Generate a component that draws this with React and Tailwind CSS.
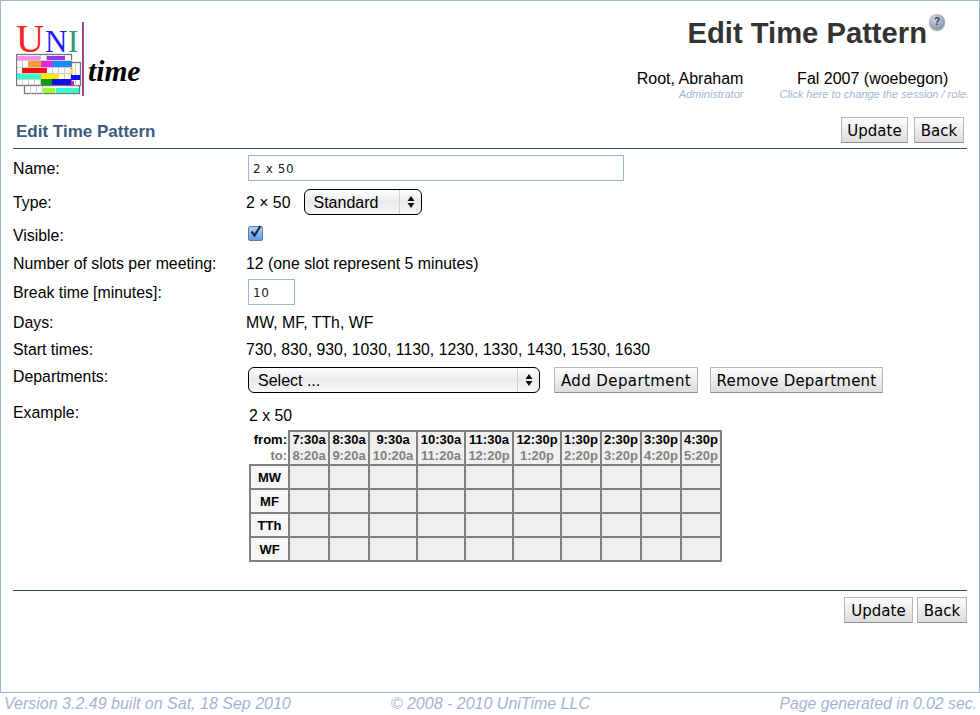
import React from 'react';

const sans = "font-['Liberation_Sans',Arial,sans-serif]";
const fromTimes = ['7:30a', '8:30a', '9:30a', '10:30a', '11:30a', '12:30p', '1:30p', '2:30p', '3:30p', '4:30p'];
const toTimes = ['8:20a', '9:20a', '10:20a', '11:20a', '12:20p', '1:20p', '2:20p', '3:20p', '4:20p', '5:20p'];
const colWidths = ['w-[40px]', 'w-[40px]', 'w-[48px]', 'w-[48px]', 'w-[48px]', 'w-[48px]', 'w-[40px]', 'w-[40px]', 'w-[40px]', 'w-[40px]'];
const days = ['MW', 'MF', 'TTh', 'WF'];

const Logo = () => (
  <svg width="130" height="108" viewBox="0 12 130 108" className="block">
    <text x="0" y="52" fontFamily="Liberation Serif" fontSize="39" fill="#ff2020">U</text>
    <text x="29" y="52" fontFamily="Liberation Serif" fontSize="31" fill="#2020ee">N</text>
    <text x="52" y="52" fontFamily="Liberation Serif" fontSize="31" fill="#2f9a6a">I</text>
    <rect x="66" y="22" width="2" height="74" fill="#a0409a" />
    <text x="72" y="81" fontFamily="Liberation Serif" fontStyle="italic" fontWeight="bold" fontSize="29.5" fill="#000">time</text>
    <g stroke="#777" strokeWidth="1.3">
      <rect x="0.5" y="54.5" width="55" height="31" fill="#fff" />
      <rect x="8.5" y="85.5" width="55" height="8" fill="#fff" />
      <rect x="55.5" y="62.5" width="9" height="23" fill="#fff" />
    </g>
    <path d="M1 60.5H56M1 67.5H56M1 73.5H56M1 79.5H56M6.5 55V85M12.5 55V85M18.5 55V85M24.5 55V85M30.5 55V85M36.5 55V85M42.5 55V85M48.5 55V85M59.5 63V86M14.5 86V94M20.5 86V94M26.5 86V94" stroke="#ccc" strokeWidth="1" />
    <rect x="1" y="56" width="23" height="4" fill="#ff8cf0" />
    <rect x="31" y="56" width="18" height="4" fill="#9933ee" />
    <rect x="12" y="61" width="13" height="6" fill="#ff9a33" />
    <rect x="25" y="61" width="11" height="6" fill="#ee22dd" />
    <rect x="36" y="61" width="19" height="6" fill="#1a8cff" />
    <rect x="6" y="68" width="25" height="5" fill="#ee1111" />
    <rect x="55" y="69" width="2" height="5" fill="#ffee00" />
    <rect x="1" y="74" width="24" height="5" fill="#33ffcc" />
    <rect x="25" y="74" width="18" height="5" fill="#ffee00" />
    <rect x="55" y="75" width="9" height="5" fill="#1111ee" />
    <rect x="25" y="79" width="11" height="6" fill="#119911" />
    <rect x="36" y="79" width="19" height="6" fill="#1111ee" />
    <rect x="55" y="81" width="3" height="5" fill="#dd22cc" />
    <rect x="27" y="88" width="12" height="5" fill="#99ff33" />
    <rect x="40" y="88" width="23" height="5" fill="#33ffcc" />
  </svg>
);

const Button = ({ children, className }) => (
  <button className={`h-[26px] pt-px border border-[#b5b5b5] border-b-[#8f8f8f] bg-gradient-to-b from-[#fdfdfd] to-[#dcdcdc] font-['DejaVu_Sans',sans-serif] text-[15px] leading-[20px] text-black rounded-[1px] ${className}`}>
    {children}
  </button>
);

const Chevrons = () => (
  <svg width="8" height="14" viewBox="0 0 8 14" className="absolute right-[7px] top-[6px]">
    <path d="M4 1L7.5 6H.5zM4 13L.5 8h7z" fill="#111" />
  </svg>
);

const Select = ({ label, width }) => (
  <div className={`relative ${width}`}>
    <select defaultValue={label} className={`appearance-none w-full h-[26px] pt-px rounded-[6px] border border-black bg-gradient-to-b from-[#ffffff] via-[#e9e9e9] to-[#f8f8f8] pl-[9px] ${sans} text-[16px] text-black`}>
      <option>{label}</option>
    </select>
    <div className="absolute top-px bottom-px right-[22px] w-px bg-[#cfcfcf]"></div>
    <Chevrons />
  </div>
);

const Row = ({ label, children, className, labelClass }) => (
  <div className={`flex ${className}`}>
    <div className={`w-[233px] shrink-0 ${labelClass || 'pt-[2px]'}`}>{label}</div>
    <div className="flex-1 flex items-center">{children}</div>
  </div>
);

const textInput = "h-[26px] pt-[2px] border border-[#9fb5d6] bg-white px-[4px] font-['DejaVu_Sans',sans-serif] text-[12px] tracking-[0.6px] text-[#222] outline-none";

export default function App() {
  return (
    <div className={`w-[980px] h-[715px] bg-white overflow-hidden ${sans} text-[15.85px] text-black`}>
      <div className="h-[693px] border border-[#9fb5d6] px-[12px]">
        <div className="flex justify-between h-[119px]">
          <div className="pl-[3px] pt-[11px]"><Logo /></div>
          <div className="flex flex-col items-end">
            <div className="flex items-start mt-[12px] pr-[22px] h-[47px]">
              <span className="text-[29.2px] leading-[40px] font-bold text-[#333]">Edit Time Pattern</span>
              <span className="ml-[2px] mt-[1px] w-[16px] h-[16px] rounded-full bg-[radial-gradient(circle_at_40%_30%,#d3d9e4,#6f7c94)] shadow-[0_1px_1px_#999] text-[10px] leading-[16px] font-bold text-center text-[#2f3a58]">?</span>
            </div>
            <div className="flex mt-[9px] mr-[-2px]">
              <div className="flex flex-col items-end">
                <span className="text-[16px] leading-[19px]">Root, Abraham</span>
                <span className="text-[11px] leading-[12px] italic text-[#9fb5d6]">Administrator</span>
              </div>
              <div className="flex flex-col items-center ml-[36px]">
                <span className="text-[16px] leading-[19px] pr-[3px]">Fal 2007 (woebegon)</span>
                <span className="text-[11px] leading-[12px] italic text-[#9fb5d6]">Click here to change the session / role.</span>
              </div>
            </div>
          </div>
        </div>

        <div className="flex justify-between items-end h-[29px] border-b border-[#2f5070] pb-[5px]">
          <span className="pl-[3px] text-[17px] leading-[20px] pb-px font-bold text-[#3b5a80]">Edit Time Pattern</span>
          <div className="flex gap-[6px] pr-[3px]">
            <Button className="w-[67px]">Update</Button>
            <Button className="w-[50px]">Back</Button>
          </div>
        </div>

        <div className="pt-[6px]">
          <Row label="Name:" className="h-[26px] items-center">
            <input defaultValue="2 x 50" className={`${textInput} w-[376px] ml-[2px]`} />
          </Row>
          <Row label="Type:" className="h-[26px] items-center mt-[8px]">
            <span className="pt-[2px]">2 × 50</span>
            <div className="ml-[13px]"><Select label="Standard" width="w-[118px]" /></div>
          </Row>
          <Row label="Visible:" className="h-[26px] items-center mt-[7px]">
            <div className="relative ml-[2px] w-[15px] h-[15px] -mt-[3px]">
              <input type="checkbox" defaultChecked className="appearance-none block w-[15px] h-[15px] rounded-[2px] border border-[#5a7fae] bg-gradient-to-b from-[#b5d3f2] to-[#5f9be0]" />
              <svg width="16" height="16" viewBox="0 0 16 16" className="absolute -top-[2px] left-0 pointer-events-none">
                <path d="M3.5 7.5L6.5 11.5L12.5 2" fill="none" stroke="#1b2a4a" strokeWidth="2.2" />
              </svg>
            </div>
          </Row>
          <Row label="Number of slots per meeting:" className="h-[20px] items-center mt-[5px]">
            <span className="pt-[2px]">12 (one slot represent 5 minutes)</span>
          </Row>
          <Row label="Break time [minutes]:" className="h-[26px] items-center mt-[6px]">
            <input defaultValue="10" className={`${textInput} w-[47px] ml-[2px]`} />
          </Row>
          <Row label="Days:" className="h-[20px] items-center mt-[7px]">
            <span className="pt-[2px]">MW, MF, TTh, WF</span>
          </Row>
          <Row label="Start times:" className="h-[20px] items-center mt-[7px]">
            <span className="pt-[2px]">730, 830, 930, 1030, 1130, 1230, 1330, 1430, 1530, 1630</span>
          </Row>
          <Row label="Departments:" className="h-[26px] mt-[8px]" labelClass="leading-[20px]">
            <div className="ml-[2px]"><Select label="Select ..." width="w-[292px]" /></div>
            <Button className="w-[144px] ml-[14px] tracking-[0.4px]">Add Department</Button>
            <Button className="w-[173px] ml-[12px] tracking-[0.2px]">Remove Department</Button>
          </Row>
          <Row label="Example:" className="mt-[9px]" labelClass="leading-[20px] pt-px">
            <div className="ml-[3px] flex flex-col">
              <div className="leading-[20px] h-[28px] pt-[4px]">2 x 50</div>
              <table className="border-collapse text-[13px] leading-[16px] font-bold text-center">
                <tbody>
                  <tr className="h-[34px]">
                    <td className="w-[39px] p-0 pr-px text-right align-middle">
                      <div>from:</div>
                      <div className="text-[#808080]">to:</div>
                    </td>
                    {fromTimes.map((t, i) => (
                      <td key={t} className={`${colWidths[i]} p-0 border-2 border-[#808080] bg-[#efefef] whitespace-nowrap`}>
                        <div>{t}</div>
                        <div className="text-[#808080]">{toTimes[i]}</div>
                      </td>
                    ))}
                  </tr>
                  {days.map((d) => (
                    <tr key={d} className="h-[24px]">
                      <td className="w-[39px] p-0 pt-[2px] border-2 border-[#808080] bg-[#f7f7f7]">{d}</td>
                      {colWidths.map((w, i) => (
                        <td key={i} className={`${w} p-0 border-2 border-[#808080] bg-[#efefef]`}></td>
                      ))}
                    </tr>
                  ))}
                </tbody>
              </table>
            </div>
          </Row>
        </div>

        <div className="mt-[28px] border-t border-[#2f5070] pt-[6px] flex justify-end gap-[4px]">
          <Button className="w-[69px]">Update</Button>
          <Button className="w-[50px]">Back</Button>
        </div>
      </div>
      <div className="flex items-center h-[22px] pl-[4px] pr-[3px] text-[16px] italic text-[#9fb5d6]">
        <span>Version 3.2.49 built on Sat, 18 Sep 2010</span>
        <span className="ml-[100px]">© 2008 - 2010 UniTime LLC</span>
        <span className="ml-auto text-[15.8px]">Page generated in 0.02 sec.</span>
      </div>
    </div>
  );
}
